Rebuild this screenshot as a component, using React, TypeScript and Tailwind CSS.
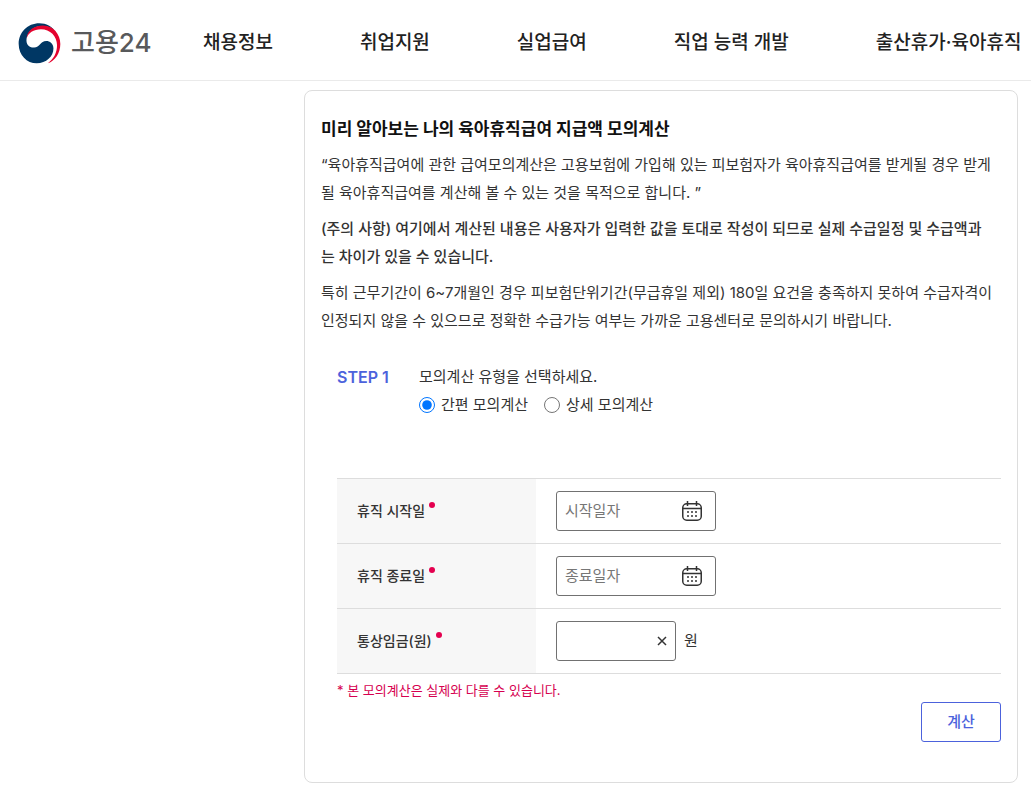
import React, { useState } from "react";

const menus = ["채용정보", "취업지원", "실업급여", "직업 능력 개발", "출산휴가·육아휴직"];

const Logo: React.FC = () => (
  <svg viewBox="23 20 129 125" className="h-[41px] w-[43px]" aria-hidden="true">
    <path
      fill="#003764"
      d="M137 47C126 31 108 21 87 21C51 21 24 49 24 84C24 118 49 143 79 143C108 143 130 122 130 98C130 83 119 75 108 75C90 75 88 96 70 95C55 95 46 85 48 68C52 42 75 29 95 29C115 29 128 36 137 47Z"
    />
    <path
      fill="#e4032e"
      d="M48 68C50 40 75 28 98 28C130 28 151 55 151 84C151 112 135 135 113 143C130 130 141 112 141 88C141 60 120 39 92 39C70 39 52 50 48 68Z"
    />
  </svg>
);

const Header: React.FC = () => {
  return (
    <header className="flex h-[81px] items-center overflow-hidden border-b border-[#eaeaea] pb-0.5 pl-[18px] pt-2">
      <a
        href="#"
        className="flex w-[185px] shrink-0 items-center gap-2.5 text-[26px] font-medium text-[#58595b]"
      >
        <Logo />
        고용24
      </a>
      <nav className="flex gap-[87px] whitespace-nowrap text-[19px] font-medium text-[#222]">
        {menus.map((menu) => (
          <a key={menu} href="#">
            {menu}
          </a>
        ))}
      </nav>
    </header>
  );
};

const CalendarIcon: React.FC = () => (
  <svg viewBox="0 0 20 20" className="size-5" fill="none" stroke="#333" strokeWidth="1.5" aria-hidden="true">
    <rect x="0.75" y="2.75" width="18.5" height="16.5" rx="4" />
    <path d="M1 7.5h18M5.5 0v5M14.5 0v5" />
    <path stroke="#666" strokeWidth="2" strokeDasharray="2 2" d="M5 11h10M5 15h10" />
  </svg>
);

interface RowProps {
  id: string;
  label: string;
  children: React.ReactNode;
}

const Row: React.FC<RowProps> = ({ id, label, children }) => (
  <tr className="h-[65px] border-b border-[#ddd]">
    <th scope="row" className="w-[199px] bg-[#f7f7f7] pl-5 text-left text-sm font-medium">
      <label htmlFor={id} className="flex items-center gap-1">
        {label}
        <span className="mb-3 size-1.5 rounded-full bg-[#e4004f]" />
      </label>
    </th>
    <td className="pl-5">{children}</td>
  </tr>
);

const DateField: React.FC<{ id: string; placeholder: string }> = ({ id, placeholder }) => (
  <div className="flex h-10 w-40 items-center rounded-[3px] border border-[#717171] pl-2 pr-[13px]">
    <input
      id={id}
      type="text"
      placeholder={placeholder}
      className="min-w-0 flex-1 outline-none placeholder:text-[#767676]"
    />
    <button type="button" aria-label="달력 열기">
      <CalendarIcon />
    </button>
  </div>
);

const App: React.FC = () => {
  const [type, setType] = useState("simple");
  const [wage, setWage] = useState("");

  return (
    <div className="bg-white font-['Inter','Noto_Sans_CJK_KR',sans-serif] text-[15px] leading-7 text-[#333]">
      <Header />
      <div className="flex">
        <aside className="w-[304px] shrink-0" />
        <main className="mb-2.5 mr-[13px] mt-[9px] min-w-0 flex-1 rounded-lg border border-[#ddd] px-4 pb-10 pt-6">
          <div className="flex flex-col gap-2">
            <h1 className="text-[17px] font-bold text-[#111]">
              미리 알아보는 나의 육아휴직급여 지급액 모의계산
            </h1>
            <p>
              “육아휴직급여에 관한 급여모의계산은 고용보험에 가입해 있는 피보험자가 육아휴직급여를 받게될 경우
              받게될 육아휴직급여를 계산해 볼 수 있는 것을 목적으로 합니다. ”
            </p>
            <p className="font-medium">
              (주의 사항) 여기에서 계산된 내용은 사용자가 입력한 값을 토대로 작성이 되므로 실제 수급일정 및
              수급액과
              <br />는 차이가 있을 수 있습니다.
            </p>
            <p>
              특히 근무기간이 6~7개월인 경우 피보험단위기간(무급휴일 제외) 180일 요건을 충족하지 못하여
              수급자격이 인정되지 않을 수 있으므로 정확한 수급가능 여부는 가까운 고용센터로 문의하시기 바랍니다.
            </p>
          </div>

          <form className="mt-7 pl-4" onSubmit={(e) => e.preventDefault()}>
            <div className="flex">
              <strong className="w-[82px] text-base leading-7 font-semibold text-[#4c62dc]">STEP 1</strong>
              <fieldset>
                <legend>모의계산 유형을 선택하세요.</legend>
                <div className="flex gap-4">
                  <label className="flex items-center gap-1.5">
                    <input
                      type="radio"
                      name="type"
                      className="size-4"
                      checked={type === "simple"}
                      onChange={() => setType("simple")}
                    />
                    간편 모의계산
                  </label>
                  <label className="flex items-center gap-1.5">
                    <input
                      type="radio"
                      name="type"
                      className="size-4"
                      checked={type === "detail"}
                      onChange={() => setType("detail")}
                    />
                    상세 모의계산
                  </label>
                </div>
              </fieldset>
            </div>

            <table className="mt-[59px] w-full border-t border-[#ddd]">
              <tbody>
                <Row id="start" label="휴직 시작일">
                  <DateField id="start" placeholder="시작일자" />
                </Row>
                <Row id="end" label="휴직 종료일">
                  <DateField id="end" placeholder="종료일자" />
                </Row>
                <Row id="wage" label="통상임금(원)">
                  <div className="flex items-center gap-2">
                    <div className="flex h-10 w-[120px] items-center rounded-[3px] border border-[#717171] px-2">
                      <input
                        id="wage"
                        type="text"
                        value={wage}
                        onChange={(e) => setWage(e.target.value)}
                        className="min-w-0 flex-1 outline-none"
                      />
                      <button type="button" aria-label="지우기" onClick={() => setWage("")}>
                        <svg viewBox="0 0 10 10" className="size-2.5" stroke="#333" strokeWidth="1.5">
                          <path d="M1 1l8 8M9 1l-8 8" />
                        </svg>
                      </button>
                    </div>
                    <label htmlFor="wage">원</label>
                  </div>
                </Row>
              </tbody>
            </table>

            <p className="mt-1 text-[13px] leading-6 text-[#d6004f]">* 본 모의계산은 실제와 다를 수 있습니다.</p>
            <div className="flex justify-end">
              <button
                type="submit"
                className="h-10 w-20 rounded-[3px] border border-[#4c62dc] font-medium text-[#4c62dc]"
              >
                계산
              </button>
            </div>
          </form>
        </main>
      </div>
    </div>
  );
};

export default App;
